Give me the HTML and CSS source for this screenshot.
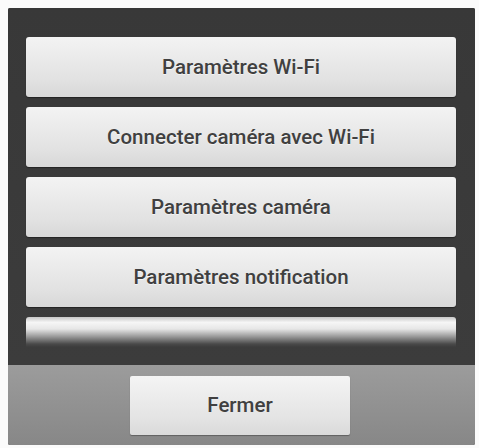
FILE: index.html
```html
<!DOCTYPE html>
<html lang="fr">
<head>
<meta charset="utf-8">
<link rel="stylesheet" href="styles.css">
</head>
<body>
<div class="dialog">
  <div class="list">
    <div class="item">Paramètres Wi-Fi</div>
    <div class="item">Connecter caméra avec Wi-Fi</div>
    <div class="item">Paramètres caméra</div>
    <div class="item">Paramètres notification</div>
    <div class="item partial"></div>
  </div>
  <div class="footer">
    <div class="close">Fermer</div>
  </div>
</div>
</body>
</html>
```
FILE: styles.css
```css
html, body {
  margin: 0;
  padding: 0;
  background: #fbfbfb;
}
body {
  padding: 8px 4px 3px 8px;
  font-family: Roboto, "Liberation Sans", sans-serif;
}
.dialog {
  width: 467px;
  background: #3a3a3a;
  border-radius: 2px;
  overflow: hidden;
}
.list {
  height: 357px;
  box-sizing: border-box;
  padding: 29px 19px 0 18px;
  display: flex;
  flex-direction: column;
  gap: 10px;
  overflow: hidden;
  background: linear-gradient(#383838, #3c3c3c);
}
.item {
  flex: none;
  height: 60px;
  border-radius: 3px;
  background: linear-gradient(#f3f3f3, #e2e2e2 70%, #d8d8d8);
  box-shadow: 0 1px 1px rgba(0,0,0,0.4);
  display: flex;
  align-items: center;
  justify-content: center;
  font-size: 20.5px;
  font-weight: 500;
  color: #404040;
  text-shadow: 0 1px 0 rgba(255,255,255,0.6);
}
.item.partial {
  height: 30px;
  border-radius: 3px 3px 0 0;
  background: linear-gradient(#c8c8c8 0%, #f6f6f6 18%, #e6e6e6 40%, #9a9a9a 65%, #4a4a4a 90%, #3c3c3c 100%);
  box-shadow: none;
}
.footer {
  height: 80px;
  background: linear-gradient(#9c9c9c, #878787);
  display: flex;
  justify-content: center;
  align-items: center;
  padding-right: 3px;
  box-sizing: border-box;
}
.close {
  width: 220px;
  height: 59px;
  border-radius: 2px;
  background: linear-gradient(#f4f4f4, #e4e4e4 70%, #dadada);
  box-shadow: 0 1px 1px rgba(0,0,0,0.3);
  display: flex;
  align-items: center;
  justify-content: center;
  font-size: 20.5px;
  font-weight: 500;
  color: #404040;
}
```
